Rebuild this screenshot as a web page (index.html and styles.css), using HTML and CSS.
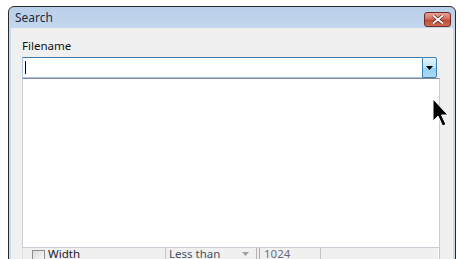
FILE: index.html
```html
<!DOCTYPE html>
<html lang="en">
<head>
  <meta charset="UTF-8" />
  <title>Search</title>
  <link rel="stylesheet" href="styles.css">
</head>
<body>
  <div class="window">
    <div class="titlebar">
      <span class="title">Search</span>
      <button class="close" type="button">
        <svg width="12" height="9" viewBox="0 0 12 9"><path d="M1 0.5 L11 8.5 M11 0.5 L1 8.5" stroke="#5a1e1e" stroke-width="3.2"/><path d="M1 0.5 L11 8.5 M11 0.5 L1 8.5" stroke="#fff" stroke-width="1.8"/></svg>
      </button>
    </div>

    <div class="client">
      <label class="field-label" for="filename">Filename</label>
      <div class="combo">
        <div class="combo-input" id="filename"><span class="caret"></span></div>
        <div class="combo-btn">
          <svg width="7" height="4" viewBox="0 0 7 4"><path d="M0 0 H7 L3.5 4 Z" fill="#000"/></svg>
        </div>
        <div class="droplist"></div>
      </div>

      <div class="group">
        <div class="row">
          <span class="check"></span>
          <span class="row-label">Width</span>
          <div class="select">
            <span>Less than</span>
            <svg width="7" height="4" viewBox="0 0 7 4"><path d="M0 0 H7 L3.5 4 Z" fill="#a0a0a0"/></svg>
          </div>
          <div class="edit">1024</div>
        </div>
      </div>
    </div>
  </div>

  <svg class="cursor" width="17" height="30" viewBox="0 0 17 30">
    <path d="M1 1 L1 23 L6 18 L10.5 28 L14 26.5 L9.5 17 L16 17 Z" fill="#000" stroke="#fff" stroke-width="1" stroke-linejoin="miter"/>
  </svg>
</body>
</html>
```

FILE: styles.css
```css
body { margin: 0; background: #fff; font-family: "Noto Sans", "Liberation Sans", sans-serif; font-size: 11.5px; color: #1a1a1a; overflow: hidden; height: 259px; }

.window { position: relative; margin: 6px 0 0 8px; width: 448px; height: 300px; border: 1px solid #2a2a2a; border-radius: 6px 6px 0 0; padding: 0 2px; background: linear-gradient(#b9cfe8, #c8dbf0 30px, #c8dcf0); box-sizing: border-box; }

.titlebar { height: 21px; display: flex; align-items: center; justify-content: space-between; padding: 0 2px 0 4px; }
.title { font-size: 12px; color: #1e2a3a; }
.close { width: 27px; height: 15px; padding: 0; margin-top: 3px; border: 1px solid #6e2b24; border-radius: 3px; background: linear-gradient(#e5a295, #d2705f 45%, #c04b36 55%, #cf6a52); display: flex; align-items: center; justify-content: center; }

.client { background: #f0f0f0; height: 279px; padding: 10px 16px 0 11px; box-sizing: border-box; }

.field-label { display: block; line-height: 16px; margin-bottom: 3px; color: #111; }

.combo { position: relative; display: flex; height: 21px; }
.combo-input { flex: 1; background: #fff; border: 1px solid #a9c9e6; border-top-color: #3d7bad; border-right: none; display: flex; align-items: center; padding-left: 2px; }
.caret { width: 1px; height: 13px; background: #000; }
.combo-btn { width: 13px; border: 1px solid #3c7fb1; border-radius: 0 2px 2px 0; background: linear-gradient(#e3f3fc, #bfe3f8 50%, #97d0f2 52%, #a9daf4); display: flex; align-items: center; justify-content: center; padding-top: 1px; }

.droplist { position: absolute; top: 21px; left: 0; width: 418px; height: 170px; box-sizing: border-box; background: #fff; border: 1px solid #c9ced6; border-top: 1px solid #828790; z-index: 2; }

.group { margin: 74px -3px 0 0; height: 140px; border: 1px solid #d5dfe5; border-right-color: #c3c8cd; box-shadow: inset -1px 0 #fff; padding: 90px 0 0 9px; }

.row { display: flex; align-items: center; height: 21px; }
.check { align-self: flex-start; width: 11px; height: 11px; margin: 7px 3px 0 0; border: 1px solid #8e8f8f; background: linear-gradient(135deg, #dcdcdc, #fafafa); }
.row-label { width: 117px; line-height: 14px; color: #1a1a2a; }
.select { width: 92px; height: 21px; box-sizing: border-box; border: 1px solid #c5c5c5; border-right-color: #b5b5b5; display: flex; align-items: center; justify-content: space-between; padding: 0 7px 0 3px; color: #4a5060; }
.edit { width: 62px; height: 21px; box-sizing: border-box; margin-left: 2px; border: 1px solid #c5c5c5; border-left-color: #a8a8a8; padding: 2px 4px; color: #6d6d80; line-height: 15px; }

.cursor { position: absolute; left: 432px; top: 98px; z-index: 10; }
```
